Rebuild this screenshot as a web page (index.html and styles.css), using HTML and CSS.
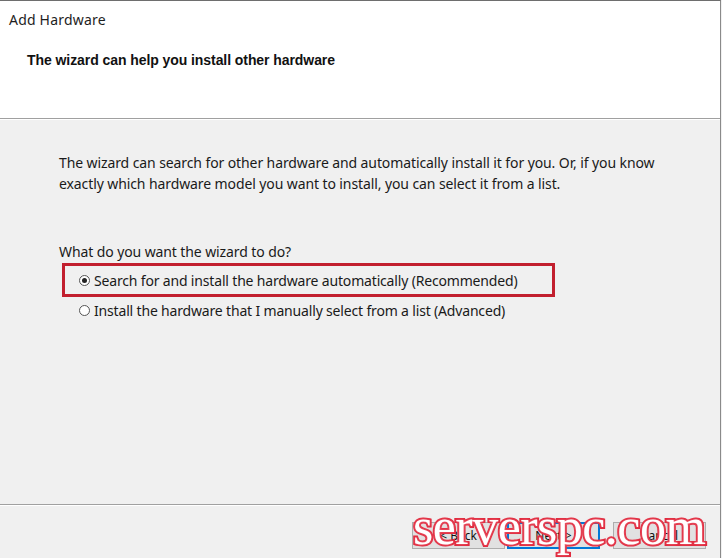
FILE: index.html
```html
<!DOCTYPE html>
<html>
<head>
<meta charset="utf-8">
<link rel="stylesheet" href="styles.css">
</head>
<body>
<div class="window">
  <div class="header">
    <div class="title">Add Hardware</div>
    <div class="subtitle">The wizard can help you install other hardware</div>
  </div>
  <div class="content">
    <p class="intro">The wizard can search for other hardware and automatically install it for you. Or, if you know exactly which hardware model you want to install, you can select it from a list.</p>
    <p class="question">What do you want the wizard to do?</p>
    <div class="highlight">
      <label class="option"><span class="radio checked"></span>Search for and install the hardware automatically (Recommended)</label>
    </div>
    <label class="option second"><span class="radio"></span>Install the hardware that I manually select from a list (Advanced)</label>
  </div>
  <div class="footer">
    <div class="buttons">
      <button class="btn">&lt; Back</button>
      <button class="btn primary">Next &gt;</button>
      <button class="btn cancel">Cancel</button>
    </div>
    <div class="watermark">serverspc.com</div>
  </div>
</div>
</body>
</html>
```
FILE: styles.css
```css
html, body {
  margin: 0;
  padding: 0;
}
body {
  width: 722px;
  height: 558px;
  overflow: hidden;
  background: #f0f0f0;
  font-family: "Noto Sans", "Open Sans", sans-serif;
  color: #1a1a1a;
}
.window {
  width: 720px;
  height: 557px;
  border-top: 1px solid #6e6e6e;
  border-right: 1px solid #8a8a8a;
  display: flex;
  flex-direction: column;
  background: #f0f0f0;
}
.header {
  height: 118px;
  background: #ffffff;
  border-bottom: 1px solid #a0a0a0;
  box-shadow: 0 1px 0 #ffffff;
  box-sizing: border-box;
  padding: 9px 0 0 9px;
}
.title {
  font-size: 14px;
  line-height: 20px;
  letter-spacing: 0.2px;
  color: #1e1e1e;
}
.subtitle {
  margin: 21px 0 0 18px;
  font-family: "Liberation Sans", Arial, sans-serif;
  font-weight: bold;
  font-size: 14px;
  line-height: 19px;
  letter-spacing: -0.07px;
  color: #111;
}
.content {
  flex: 1;
  padding: 33px 0 0 59px;
  font-size: 14px;
}
.intro {
  margin: 0;
  width: 620px;
  line-height: 21px;
  letter-spacing: -0.1px;
}
.question {
  margin: 47px 0 0 0;
  line-height: 21px;
  letter-spacing: -0.1px;
}
.highlight {
  margin: 1px 0 0 3px;
  width: 473px;
  height: 28px;
  border: 3px solid #c21f2e;
  display: flex;
  align-items: center;
  padding-left: 14px;
  box-sizing: content-box;
}
.option {
  display: flex;
  align-items: center;
  line-height: 21px;
  letter-spacing: -0.17px;
  white-space: nowrap;
}
.second {
  margin: 3px 0 0 20px;
}
.radio {
  width: 9px;
  height: 9px;
  border: 1px solid #555;
  border-radius: 50%;
  background: #fff;
  margin-right: 4px;
  position: relative;
  flex: none;
}
.radio.checked::after {
  content: "";
  position: absolute;
  left: 2px;
  top: 2px;
  width: 5px;
  height: 5px;
  border-radius: 50%;
  background: #222;
}
.footer {
  height: 53px;
  border-top: 1px solid #a0a0a0;
  box-shadow: inset 0 1px 0 #ffffff;
  position: relative;
}
.buttons {
  display: flex;
  padding: 17px 0 0 412px;
}
.btn {
  width: 93px;
  height: 27px;
  margin-right: 2px;
  border: 1px solid #adadad;
  background: #e1e1e1;
  font-family: "Noto Sans", sans-serif;
  font-size: 12px;
  color: #111;
  padding: 0;
}
.btn.primary {
  border: 1px solid #0078d7;
  box-shadow: inset 0 0 0 1px #0078d7;
}
.btn.cancel {
  margin-left: 11px;
}
.watermark {
  position: absolute;
  left: 413px;
  top: -4px;
  font-family: "Liberation Serif", serif;
  font-size: 52px;
  letter-spacing: -0.5px;
  line-height: 52px;
  white-space: nowrap;
  color: #fff;
  -webkit-text-stroke: 4px #e0283c;
  paint-order: stroke fill;
  text-shadow: 0 0 3px #f07a88;
}
```
